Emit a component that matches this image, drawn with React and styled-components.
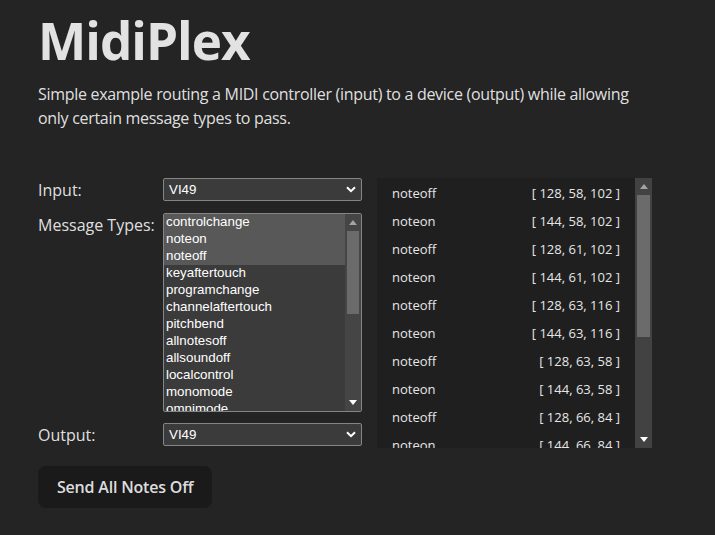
import styled, { createGlobalStyle } from "styled-components";

const GlobalStyle = createGlobalStyle`
  html, body {
    margin: 0;
    background: #242424;
  }
  body {
    color: rgba(255, 255, 255, 0.87);
    font-family: "Open Sans", "Noto Sans", sans-serif;
    font-size: 16px;
    line-height: 1.5;
  }
`;

const Page = styled.div`
  padding: 12px 38px 0;
`;

const Title = styled.h1`
  margin: 0;
  font-size: 51.2px;
  line-height: 1.1;
  font-weight: 700;
  letter-spacing: -1px;
`;

const Intro = styled.p`
  margin: 14px 0 0;
  max-width: 600px;
  font-size: 16px;
  line-height: 24px;
  letter-spacing: -0.3px;
`;

const Main = styled.div`
  display: flex;
  align-items: flex-start;
  gap: 15px;
  margin-top: 48px;
`;

const LeftCol = styled.div`
  display: flex;
  flex-direction: column;
  align-items: flex-start;
`;

const Form = styled.div`
  display: grid;
  grid-template-columns: 125px 199px;
  row-gap: 11px;
`;

const Label = styled.label`
  font-size: 16px;
  line-height: 23px;
  margin-top: 1px;
`;

const Select = styled.div`
  box-sizing: border-box;
  height: 23px;
  display: flex;
  align-items: center;
  justify-content: space-between;
  padding: 0 5px 0 5px;
  background: #3b3b3b;
  border: 1px solid #858585;
  border-radius: 2px;
  font-family: "Liberation Sans", Arial, sans-serif;
  font-size: 13.33px;
  color: #fff;
`;

const ListBox = styled.div`
  box-sizing: border-box;
  height: 199px;
  display: flex;
  background: #3b3b3b;
  border: 1px solid #858585;
  border-radius: 2px;
  overflow: hidden;
`;

const Options = styled.div`
  flex: 1;
  overflow: hidden;
`;

const Option = styled.div`
  height: 17px;
  line-height: 16px;
  padding-left: 2px;
  font-family: "Liberation Sans", Arial, sans-serif;
  font-size: 13.33px;
  color: #fff;
  white-space: nowrap;
  background: ${(p) => (p.$selected ? "#585858" : "transparent")};
`;

const Scrollbar = styled.div`
  width: ${(p) => p.$width}px;
  flex: none;
  display: flex;
  flex-direction: column;
  background: ${(p) => p.$track};
`;

const ArrowBtn = styled.div`
  height: 17px;
  flex: none;
  display: flex;
  align-items: center;
  justify-content: center;
`;

const Track = styled.div`
  flex: 1;
  display: flex;
  justify-content: center;
`;

const Thumb = styled.div`
  width: ${(p) => p.$width}px;
  background: #6b6b6b;
`;

const Button = styled.button`
  margin-top: 19px;
  height: 42px;
  padding: 0 18px;
  border: 1px solid transparent;
  border-radius: 8px;
  background: #1a1a1a;
  color: rgba(255, 255, 255, 0.87);
  font-family: "Open Sans", "Noto Sans", sans-serif;
  font-size: 16px;
  font-weight: 600;
  letter-spacing: -0.2px;
  cursor: pointer;
`;

const Panel = styled.div`
  width: 275px;
  height: 270px;
  display: flex;
  background: #1f1f1f;
`;

const Log = styled.div`
  flex: 1;
  overflow: hidden;
  padding-top: 1px;
`;

const LogRow = styled.div`
  height: 28px;
  display: flex;
  align-items: center;
  justify-content: space-between;
  padding: 0 15px;
  font-size: 13px;
  color: #e6e6e6;
`;

const Chevron = () => (
  <svg width="10" height="7" viewBox="0 0 10 7">
    <path d="M1 1.2 L5 5.2 L9 1.2" fill="none" stroke="#fff" strokeWidth="2" />
  </svg>
);

const Arrow = ({ dir, color }) => (
  <svg width="8" height="5" viewBox="0 0 8 5">
    <path d={dir === "up" ? "M0 5 L4 0 L8 5 Z" : "M0 0 L8 0 L4 5 Z"} fill={color} />
  </svg>
);

function FakeScroll({ width, track, thumbTop, thumbHeight, thumbWidth }) {
  return (
    <Scrollbar $width={width} $track={track}>
      <ArrowBtn>
        <Arrow dir="up" color="#a3a3a3" />
      </ArrowBtn>
      <Track>
        <Thumb
          $width={thumbWidth}
          style={{ marginTop: thumbTop, height: thumbHeight }}
        />
      </Track>
      <ArrowBtn>
        <Arrow dir="down" color="#fff" />
      </ArrowBtn>
    </Scrollbar>
  );
}

const messageTypes = [
  "controlchange",
  "noteon",
  "noteoff",
  "keyaftertouch",
  "programchange",
  "channelaftertouch",
  "pitchbend",
  "allnotesoff",
  "allsoundoff",
  "localcontrol",
  "monomode",
  "omnimode",
];

const selected = ["controlchange", "noteon", "noteoff"];

const messages = [
  ["noteoff", "[ 128, 58, 102 ]"],
  ["noteon", "[ 144, 58, 102 ]"],
  ["noteoff", "[ 128, 61, 102 ]"],
  ["noteon", "[ 144, 61, 102 ]"],
  ["noteoff", "[ 128, 63, 116 ]"],
  ["noteon", "[ 144, 63, 116 ]"],
  ["noteoff", "[ 128, 63, 58 ]"],
  ["noteon", "[ 144, 63, 58 ]"],
  ["noteoff", "[ 128, 66, 84 ]"],
  ["noteon", "[ 144, 66, 84 ]"],
];

export default function App() {
  return (
    <>
      <GlobalStyle />
      <Page>
        <Title>MidiPlex</Title>
        <Intro>
          Simple example routing a MIDI controller (input) to a device (output)
          while allowing only certain message types to pass.
        </Intro>
        <Main>
          <LeftCol>
            <Form>
              <Label>Input:</Label>
              <Select>
                <span>VI49</span>
                <Chevron />
              </Select>
              <Label>Message Types:</Label>
              <ListBox>
                <Options>
                  {messageTypes.map((t) => (
                    <Option key={t} $selected={selected.includes(t)}>
                      {t}
                    </Option>
                  ))}
                </Options>
                <FakeScroll
                  width={16}
                  track="#454545"
                  thumbTop={0}
                  thumbHeight={83}
                  thumbWidth={12}
                />
              </ListBox>
              <Label>Output:</Label>
              <Select>
                <span>VI49</span>
                <Chevron />
              </Select>
            </Form>
            <Button>Send All Notes Off</Button>
          </LeftCol>
          <Panel>
            <Log>
              {messages.map(([type, data], i) => (
                <LogRow key={i}>
                  <span>{type}</span>
                  <span>{data}</span>
                </LogRow>
              ))}
            </Log>
            <FakeScroll
              width={17}
              track="#424242"
              thumbTop={0}
              thumbHeight={142}
              thumbWidth={13}
            />
          </Panel>
        </Main>
      </Page>
    </>
  );
}
